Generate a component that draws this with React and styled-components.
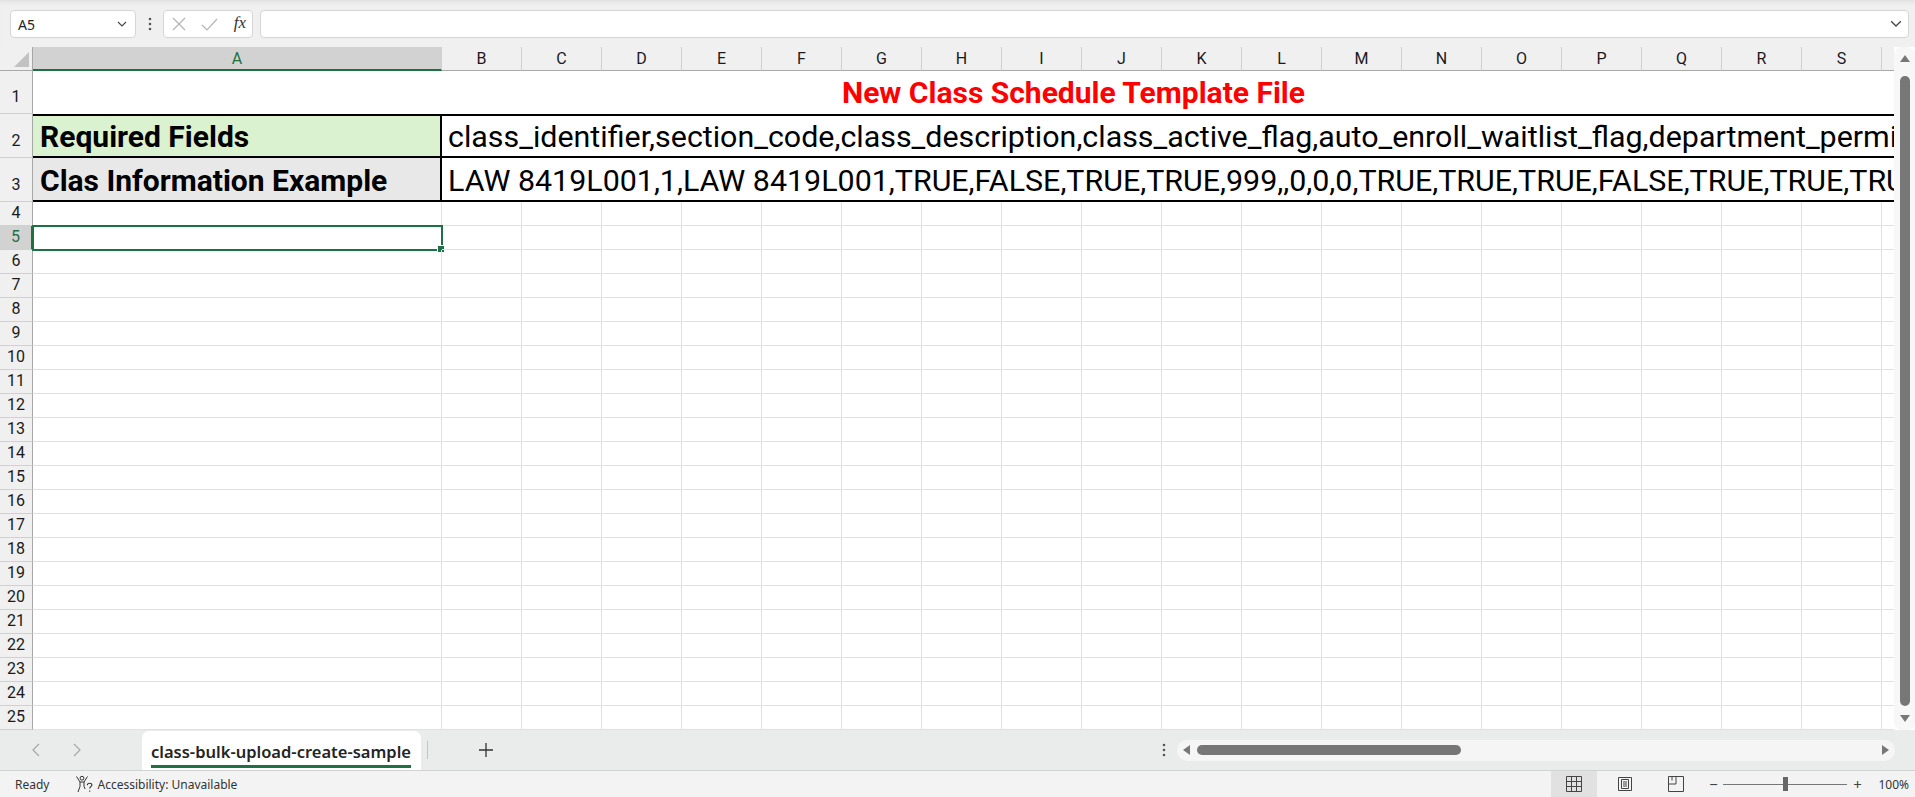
import React from "react";
import styled, { createGlobalStyle, css } from "styled-components";

const GlobalStyle = createGlobalStyle`
  html, body {
    margin: 0;
    padding: 0;
    overflow: hidden;
    background: #f0f0f0;
  }
  body {
    font-family: "Noto Sans", "Open Sans", sans-serif;
  }
  * {
    box-sizing: border-box;
  }
`;

const green = "#1e7145";
const gridLine = "#e1e1e1";
const headerLine = "#d0d0d0";
const cellFont = `"Roboto", "Liberation Sans", sans-serif`;

const COLUMNS = "ABCDEFGHIJKLMNOPQRST".split("");
const EMPTY_ROWS = Array.from({ length: 22 }, (_, i) => i + 4);

const REQUIRED_FIELDS =
  "class_identifier,section_code,class_description,class_active_flag,auto_enroll_waitlist_flag,department_permission_flag";
const EXAMPLE_ROW =
  "LAW 8419L001,1,LAW 8419L001,TRUE,FALSE,TRUE,TRUE,999,,0,0,0,TRUE,TRUE,TRUE,FALSE,TRUE,TRUE,TRUE,FALSE";

function Chevron({ size = 10 }) {
  return (
    <svg width={size} height={size * 0.6} viewBox="0 0 10 6">
      <path d="M1 1l4 4 4-4" fill="none" stroke="#444" strokeWidth="1.1" />
    </svg>
  );
}

function VerticalDots() {
  return (
    <svg width="4" height="14" viewBox="0 0 4 14">
      <circle cx="2" cy="2" r="1.3" fill="#555" />
      <circle cx="2" cy="7" r="1.3" fill="#555" />
      <circle cx="2" cy="12" r="1.3" fill="#555" />
    </svg>
  );
}

export default function App() {
  return (
    <>
      <GlobalStyle />
      <Window>
        <FormulaBar>
          <NameBox>
            <span>A5</span>
            <Chevron />
          </NameBox>
          <DotsHolder>
            <VerticalDots />
          </DotsHolder>
          <FuncBox>
            <svg width="14" height="14" viewBox="0 0 14 14">
              <path d="M1 1l12 12M13 1L1 13" stroke="#b4b4b4" strokeWidth="1.2" />
            </svg>
            <svg width="17" height="13" viewBox="0 0 17 13">
              <path d="M1 7l5 5L16 1" fill="none" stroke="#b4b4b4" strokeWidth="1.2" />
            </svg>
            <FxLabel>fx</FxLabel>
          </FuncBox>
          <FormulaInput>
            <Chevron size={12} />
          </FormulaInput>
        </FormulaBar>

        <SheetArea>
          <GridViewport>
            <Grid>
              <Corner />
              {COLUMNS.map((c) => (
                <ColHeader key={c} $selected={c === "A"}>
                  {c}
                </ColHeader>
              ))}

              <RowHeader $tall>1</RowHeader>
              <TitleCell>
                <Title>New Class Schedule Template File</Title>
              </TitleCell>

              <RowHeader $tall>2</RowHeader>
              <LabelCell $bg="#daf2d0" $top>
                Required Fields
              </LabelCell>
              <ValueCell $top>{REQUIRED_FIELDS}</ValueCell>

              <RowHeader $tall>3</RowHeader>
              <LabelCell $bg="#e8e8e8">Clas Information Example</LabelCell>
              <ValueCell>{EXAMPLE_ROW}</ValueCell>

              {EMPTY_ROWS.map((r) => (
                <React.Fragment key={r}>
                  <RowHeader $selected={r === 5}>{r}</RowHeader>
                  {COLUMNS.map((c) => (
                    <Cell key={c} $active={r === 5 && c === "A"} />
                  ))}
                </React.Fragment>
              ))}
            </Grid>
          </GridViewport>
          <VScroll>
            <ArrowUp />
            <VThumb />
            <ArrowDown />
          </VScroll>
        </SheetArea>

        <TabBar>
          <TabNav>
            <svg width="8" height="14" viewBox="0 0 8 14">
              <path d="M7 1L1 7l6 6" fill="none" stroke="#a8a8a8" strokeWidth="1.2" />
            </svg>
            <svg width="8" height="14" viewBox="0 0 8 14">
              <path d="M1 1l6 6-6 6" fill="none" stroke="#a8a8a8" strokeWidth="1.2" />
            </svg>
          </TabNav>
          <SheetTab>
            <SheetTabLabel>class-bulk-upload-create-sample</SheetTabLabel>
          </SheetTab>
          <TabSeparator />
          <AddSheet>
            <svg width="14" height="14" viewBox="0 0 14 14">
              <path d="M7 0v14M0 7h14" stroke="#333" strokeWidth="1.3" />
            </svg>
          </AddSheet>
          <Spacer />
          <DotsHolder>
            <VerticalDots />
          </DotsHolder>
          <HScroll>
            <ArrowLeft />
            <HThumb />
            <Spacer />
            <ArrowRight />
          </HScroll>
        </TabBar>

        <StatusBar>
          <StatusText>Ready</StatusText>
          <AccessItem>
            <svg width="19" height="18" viewBox="0 0 19 18">
              <circle cx="7" cy="3.2" r="1.9" fill="none" stroke="#333" strokeWidth="1" />
              <path
                d="M1.5 1.5l3.5 5.5h4l3.5-5.5M5 7v4.5L3 17M9 7v4.5l1.2 2.5"
                fill="none"
                stroke="#333"
                strokeWidth="1"
                strokeLinejoin="round"
              />
              <path
                d="M12.3 10.2c0-1.3 1-2 2.3-2s2.3.8 2.3 1.9c0 1.5-2.2 1.7-2.2 3.3M14.7 15.6v1.2"
                fill="none"
                stroke="#333"
                strokeWidth="1.1"
              />
            </svg>
            <StatusText>Accessibility: Unavailable</StatusText>
          </AccessItem>
          <Spacer />
          <ViewButtons>
            <ViewButton $active>
              <svg width="18" height="18" viewBox="0 0 18 18">
                <path
                  d="M1.5 1.5h15v15h-15zM6.5 1.5v15M11.5 1.5v15M1.5 6.5h15M1.5 11.5h15"
                  fill="none"
                  stroke="#444"
                  strokeWidth="1"
                />
              </svg>
            </ViewButton>
            <ViewButton>
              <svg width="16" height="16" viewBox="0 0 16 16">
                <path
                  d="M1.5 1.5h13v13h-13zM4.5 3.5h7v9h-7zM6 6h4M6 8h4M6 10h4"
                  fill="none"
                  stroke="#444"
                  strokeWidth="1"
                />
              </svg>
            </ViewButton>
            <ViewButton>
              <svg width="18" height="18" viewBox="0 0 18 18">
                <path
                  d="M1.5 1.5h15v15h-15zM9 1.5v7.5H1.5M5 1.5v4"
                  fill="none"
                  stroke="#444"
                  strokeWidth="1"
                />
              </svg>
            </ViewButton>
          </ViewButtons>
          <ZoomControl>
            <ZoomSign>−</ZoomSign>
            <ZoomTrack>
              <ZoomThumb />
            </ZoomTrack>
            <ZoomSign>+</ZoomSign>
            <ZoomValue>100%</ZoomValue>
          </ZoomControl>
        </StatusBar>
      </Window>
    </>
  );
}

const Window = styled.div`
  width: 1915px;
  height: 797px;
  display: flex;
  flex-direction: column;
  background: #f0f0f0;
  overflow: hidden;
`;

const FormulaBar = styled.div`
  height: 47px;
  flex: none;
  display: flex;
  align-items: center;
  padding: 1px 6px 0 10px;
  background: #f0f0f0;
  box-shadow: inset 0 5px 5px -3px rgba(0, 0, 0, 0.07);
`;

const boxBase = css`
  height: 28px;
  background: #fff;
  border: 1px solid #d6d6d6;
  border-radius: 4px;
  display: flex;
  align-items: center;
`;

const NameBox = styled.div`
  ${boxBase};
  width: 126px;
  justify-content: space-between;
  padding: 0 8px 0 7px;
  font-size: 14px;
  color: #242424;
`;

const DotsHolder = styled.div`
  width: 27px;
  display: flex;
  justify-content: center;
  align-items: center;
`;

const FuncBox = styled.div`
  ${boxBase};
  width: 90px;
  padding: 0 6px 0 8px;
  justify-content: space-between;
`;

const FxLabel = styled.span`
  font-family: "Liberation Serif", serif;
  font-style: italic;
  font-size: 17px;
  color: #333;
  padding-bottom: 2px;
`;

const FormulaInput = styled.div`
  ${boxBase};
  flex: 1;
  margin-left: 7px;
  justify-content: flex-end;
  padding-right: 6px;
`;

const SheetArea = styled.div`
  flex: none;
  height: 683px;
  display: flex;
  background: #fff;
`;

const GridViewport = styled.div`
  width: 1894px;
  overflow: hidden;
  background: #fff;
`;

const Grid = styled.div`
  display: grid;
  grid-template-columns: 33px 409px repeat(19, 80px);
  grid-template-rows: 24px 43px 44px 44px repeat(22, 24px);
  font-family: ${cellFont};
`;

const Corner = styled.div`
  background: #f0f0f0;
  border-right: 1px solid #a8a8a8;
  border-bottom: 1px solid #a8a8a8;
  position: relative;
  &::after {
    content: "";
    position: absolute;
    right: 3px;
    bottom: 3px;
    border-style: solid;
    border-width: 0 0 15px 15px;
    border-color: transparent transparent #c2c2c2 transparent;
  }
`;

const ColHeader = styled.div`
  display: flex;
  align-items: center;
  justify-content: center;
  font-size: 16px;
  color: ${(p) => (p.$selected ? green : "#1a1a1a")};
  background: ${(p) => (p.$selected ? "#d2d2d2" : "#f0f0f0")};
  border-right: 1px solid ${headerLine};
  border-bottom: ${(p) => (p.$selected ? `2px solid ${green}` : "1px solid #a8a8a8")};
`;

const RowHeader = styled.div`
  display: flex;
  align-items: flex-end;
  justify-content: center;
  padding-bottom: ${(p) => (p.$tall ? "7px" : "3px")};
  font-size: 16px;
  color: ${(p) => (p.$selected ? green : "#1a1a1a")};
  background: ${(p) => (p.$selected ? "#d2d2d2" : "#f0f0f0")};
  border-bottom: 1px solid ${headerLine};
  border-right: ${(p) => (p.$selected ? `2px solid ${green}` : "1px solid #a8a8a8")};
`;

const TitleCell = styled.div`
  grid-column: 2 / -1;
  display: flex;
  align-items: flex-end;
  padding: 0 0 6px 809px;
  white-space: nowrap;
`;

const Title = styled.span`
  font-weight: 700;
  font-size: 30px;
  line-height: 1;
  color: #ff0000;
`;

const thickTop = css`
  border-top: 2px solid #000;
`;

const LabelCell = styled.div`
  display: flex;
  align-items: flex-end;
  padding: 0 0 4px 7px;
  background: ${(p) => p.$bg};
  font-weight: 700;
  font-size: 30px;
  line-height: 1;
  color: #000;
  white-space: nowrap;
  border-right: 2px solid #000;
  border-bottom: 2px solid #000;
  ${(p) => p.$top && thickTop};
`;

const ValueCell = styled.div`
  grid-column: 3 / -1;
  display: flex;
  align-items: flex-end;
  padding: 0 0 4px 6px;
  font-size: 30.4px;
  line-height: 1;
  color: #000;
  white-space: nowrap;
  overflow: hidden;
  border-bottom: 2px solid #000;
  ${(p) => p.$top && thickTop};
`;

const Cell = styled.div`
  border-right: 1px solid ${gridLine};
  border-bottom: 1px solid ${gridLine};
  position: relative;
  ${(p) =>
    p.$active &&
    css`
      outline: 2px solid ${green};
      outline-offset: -1px;
      &::after {
        content: "";
        position: absolute;
        right: -4px;
        bottom: -4px;
        width: 6px;
        height: 6px;
        background: ${green};
        border: 1px solid #fff;
      }
    `}
`;

const VScroll = styled.div`
  flex: 1;
  display: flex;
  flex-direction: column;
  align-items: center;
  padding: 8px 0 8px;
  background: #f7f7f7;
  border-radius: 8px;
`;

const ArrowUp = styled.div`
  width: 0;
  height: 0;
  border-left: 5px solid transparent;
  border-right: 5px solid transparent;
  border-bottom: 7px solid #777;
`;

const ArrowDown = styled(ArrowUp)`
  border-bottom: none;
  border-top: 7px solid #777;
`;

const VThumb = styled.div`
  width: 10px;
  height: 630px;
  margin: 14px 0 auto;
  border-radius: 5px;
  background: #777;
`;

const TabBar = styled.div`
  height: 40px;
  flex: none;
  display: flex;
  align-items: stretch;
  background: #e9ecea;
  padding-right: 20px;
`;

const TabNav = styled.div`
  display: flex;
  align-items: center;
  gap: 33px;
  padding-left: 32px;
  width: 142px;
`;

const SheetTab = styled.div`
  margin-top: 1px;
  display: flex;
  align-items: center;
  padding: 0 10px 0 9px;
  background: #fff;
  border-radius: 7px 7px 0 0;
`;

const SheetTabLabel = styled.span`
  font-size: 16.5px;
  font-weight: 600;
  color: #242424;
  padding: 3px 0 2px;
  border-bottom: 3px solid ${green};
  margin-top: 4px;
`;

const TabSeparator = styled.div`
  width: 1px;
  height: 18px;
  align-self: center;
  margin-left: 6px;
  background: #c4c4c4;
`;

const AddSheet = styled.div`
  display: flex;
  align-items: center;
  padding-left: 51px;
`;

const Spacer = styled.div`
  flex: 1;
`;

const HScroll = styled.div`
  width: 718px;
  height: 21px;
  align-self: center;
  display: flex;
  align-items: center;
  padding: 0 6px;
  background: #f5f5f5;
  border-radius: 10px;
`;

const ArrowLeft = styled.div`
  width: 0;
  height: 0;
  border-top: 5px solid transparent;
  border-bottom: 5px solid transparent;
  border-right: 7px solid #777;
`;

const ArrowRight = styled(ArrowLeft)`
  border-right: none;
  border-left: 7px solid #777;
`;

const HThumb = styled.div`
  width: 264px;
  height: 10px;
  margin-left: 7px;
  border-radius: 5px;
  background: #767676;
`;

const StatusBar = styled.div`
  flex: 1;
  display: flex;
  align-items: center;
  background: #f3f3f3;
  border-top: 1px solid #d2d2d2;
  padding-left: 15px;
`;

const StatusText = styled.span`
  font-size: 12px;
  color: #333;
`;

const AccessItem = styled.div`
  display: flex;
  align-items: center;
  gap: 3px;
  margin-left: 26px;
`;

const ViewButtons = styled.div`
  display: flex;
  align-self: stretch;
  gap: 5px;
`;

const ViewButton = styled.div`
  width: 46px;
  display: flex;
  align-items: center;
  justify-content: center;
  background: ${(p) => (p.$active ? "#e1e1e1" : "transparent")};
`;

const ZoomControl = styled.div`
  display: flex;
  align-items: center;
  margin-left: 8px;
  padding-right: 6px;
`;

const ZoomSign = styled.span`
  font-size: 15px;
  color: #444;
  width: 12px;
  text-align: center;
`;

const ZoomTrack = styled.div`
  width: 124px;
  height: 1px;
  margin: 0 4px;
  background: #777;
  display: flex;
  align-items: center;
  padding-left: 60px;
`;

const ZoomThumb = styled.div`
  width: 5px;
  height: 14px;
  background: #666;
`;

const ZoomValue = styled.span`
  font-size: 12px;
  color: #333;
  margin-left: 15px;
`;
